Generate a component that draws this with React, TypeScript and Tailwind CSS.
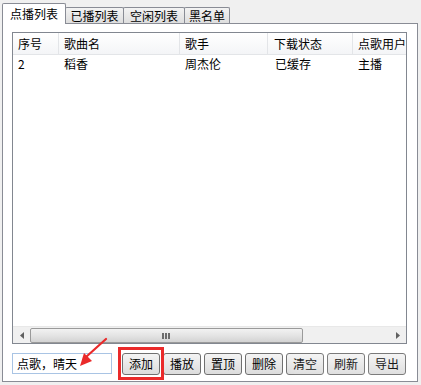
import React from 'react';

const columns = [
  { title: '序号', w: 'w-[46px]' },
  { title: '歌曲名', w: 'w-[121px]' },
  { title: '歌手', w: 'w-[88px]' },
  { title: '下载状态', w: 'w-[85px]' },
  { title: '点歌用户', w: 'w-[70px]' },
];

const row = ['2', '稻香', '周杰伦', '已缓存', '主播'];

const buttons = ['添加', '播放', '置顶', '删除', '清空', '刷新', '导出'];

const Tab = ({ label, active, w }: { label: string; active?: boolean; w: string }) =>
  active ? (
    <div className={`relative z-10 -mb-px h-[21px] ${w} bg-white border border-b-0 border-[#898c95] rounded-t-[2px] flex items-center justify-center pb-[1px]`}>
      {label}
    </div>
  ) : (
    <div className={`-ml-px h-[16px] ${w} bg-gradient-to-b from-[#f3f3f3] to-[#dedede] border border-b-0 border-[#898c95] rounded-t-[2px] flex items-center justify-center`}>
      {label}
    </div>
  );

export default function App() {
  return (
    <div
      className="relative w-[421px] h-[385px] bg-[#f0f0f0] overflow-hidden text-[12px] leading-none text-black"
      style={{ fontFamily: '"Noto Sans CJK SC", "Liberation Sans", sans-serif' }}
    >
      {/* tab strip */}
      <div className="flex items-end h-[23px] pl-[2px]">
        <Tab label="点播列表" active w="w-[64px]" />
        <Tab label="已播列表" w="w-[59px]" />
        <Tab label="空闲列表" w="w-[62px]" />
        <Tab label="黑名单" w="w-[46px]" />
      </div>

      {/* tab panel */}
      <div className="ml-[2px] w-[416px] h-[359px] border border-[#898c95] bg-white pl-[9px] pt-[8px]">
        {/* list view */}
        <div className="w-[395px] h-[312px] border border-[#828790] bg-white flex flex-col">
          <div className="flex h-[22px] border-b border-[#e3e5e8] bg-gradient-to-b from-white to-[#f4f5f7]">
            {columns.map((c, i) => (
              <div
                key={c.title}
                className={`${c.w} shrink-0 flex items-center overflow-hidden whitespace-nowrap ${i === 3 ? 'pl-[6px]' : 'pl-[5px]'} ${i < 4 ? 'border-r border-[#e3e5e8]' : ''}`}
              >
                {c.title}
              </div>
            ))}
          </div>
          <div className="flex-1">
            <div className="flex h-[17px] items-center">
              {row.map((v, i) => (
                <div
                  key={i}
                  className={`${columns[i].w} shrink-0 whitespace-nowrap ${i === 3 ? 'pl-[7px]' : 'pl-[5px]'} ${i < 4 ? 'pr-px' : ''}`}
                >
                  {v}
                </div>
              ))}
            </div>
          </div>
          {/* horizontal scrollbar */}
          <div className="h-[17px] flex items-center bg-[#f0f0f0] border-t border-[#e8e8e8]">
            <div className="w-[17px] h-full flex items-center justify-center">
              <svg width="4" height="7" viewBox="0 0 4 7">
                <path d="M4 0 L0 3.5 L4 7 Z" fill="#606060" />
              </svg>
            </div>
            <div className="relative w-[273px] h-[15px] rounded-[2px] border border-[#9a9a9a] bg-gradient-to-b from-[#f2f2f2] via-[#e4e4e4] to-[#d3d3d3]">
              <div className="absolute left-[131px] top-[4px] flex gap-[1px]">
                <span className="w-[2px] h-[6px] bg-[#6b6b6b]" />
                <span className="w-[2px] h-[6px] bg-[#6b6b6b]" />
                <span className="w-[2px] h-[6px] bg-[#6b6b6b]" />
              </div>
            </div>
            <div className="flex-1" />
            <div className="w-[17px] h-full flex items-center justify-center">
              <svg width="4" height="7" viewBox="0 0 4 7">
                <path d="M0 0 L4 3.5 L0 7 Z" fill="#606060" />
              </svg>
            </div>
          </div>
        </div>

        {/* bottom controls */}
        <div className="flex items-start mt-[9px]">
          <div className="w-[100px] h-[21px] border border-[#a9c4e4] bg-white flex items-center pl-[4px] whitespace-nowrap">
            点歌，晴天
          </div>
          <div className="flex gap-[3px] ml-[10px]">
            {buttons.map((b) => (
              <div
                key={b}
                className="w-[38px] h-[22px] rounded-[3px] border border-[#707070] bg-gradient-to-b from-[#f4f4f4] to-[#dcdcdc] flex items-center justify-center"
              >
                {b}
              </div>
            ))}
          </div>
        </div>
      </div>

      {/* red highlight box */}
      <div className="absolute left-[118px] top-[347px] w-[46px] h-[33px] border-[3px] border-[#ea2a2a]" />

      {/* red arrow */}
      <svg className="absolute left-[74px] top-[336px]" width="36" height="36" viewBox="0 0 36 36">
        <path d="M32 3 L12 21" stroke="#ea2a2a" strokeWidth="2.2" strokeLinecap="round" />
        <path d="M6 30 L10 17 L18 25 Z" fill="#ea2a2a" />
      </svg>

      {/* faint watermark */}
      <div className="absolute left-[290px] top-[352px] w-[120px] h-[26px] bg-white/10 blur-[3px] pointer-events-none" />
    </div>
  );
}
